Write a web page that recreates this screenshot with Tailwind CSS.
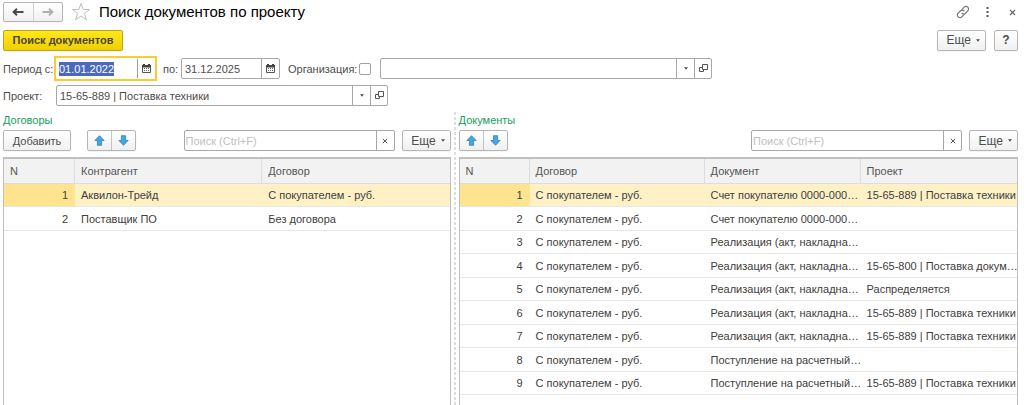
<!DOCTYPE html>
<html lang="ru">
<head>
  <meta charset="UTF-8">
  <meta name="viewport" content="width=device-width, initial-scale=1.0">
  <title>Поиск документов по проекту</title>
  <script src="https://cdn.jsdelivr.net/npm/@tailwindcss/browser@4"></script>
</head>
<body class="min-h-screen flex flex-col bg-white pl-[3px] pr-[6px] font-['Liberation_Sans',Arial,sans-serif] text-[11px] leading-4 text-[#4d4d4d]">
  <!-- Icons -->
  <svg class="hidden">
    <symbol id="calendar" viewBox="0 0 9 9">
      <path d="M.5 1.5h8v7h-8z" fill="none" stroke="#555"/>
      <path d="M0 1h9v2.5H0zM1 0h2v1H1zM6 0h2v1H6z" fill="#444"/>
      <path d="M2 4h1v1H2zM4 4h1v1H4zM6 4h1v1H6zM2 6h1v1H2zM4 6h1v1H4zM6 6h1v1H6z" fill="#666"/>
    </symbol>
    <symbol id="open" viewBox="0 0 9 9">
      <path d="M3.5.5h5v5h-5zM3.5 3.5h-3v4h4v-2" fill="none" stroke="#555"/>
    </symbol>
    <symbol id="caret" viewBox="0 0 5 3">
      <path d="M0 0h5L2.5 3z" fill="#4d4d4d"/>
    </symbol>
    <symbol id="cross" viewBox="0 0 7 7">
      <path d="M1 1l5 5M6 1L1 6" fill="none" stroke="currentColor" stroke-width="1.1"/>
    </symbol>
    <symbol id="arrow-up" viewBox="0 0 11 11">
      <path d="M5.5.7l4.6 4.8H7.6v4.8H3.4V5.5H.9z" fill="#3fa9e8" stroke="#3a7fae" stroke-width=".8"/>
    </symbol>
    <symbol id="arrow-down" viewBox="0 0 11 11">
      <path d="M5.5 10.3L.9 5.5h2.5V.7h4.2v4.8h2.5z" fill="#3fa9e8" stroke="#3a7fae" stroke-width=".8"/>
    </symbol>
  </svg>

  <!-- Title bar -->
  <header class="flex items-center h-6">
    <div class="flex h-5 w-[60px] border border-[#b5b5b5] rounded-xs bg-linear-to-b from-white to-[#f0f0f0] shadow-xs">
      <button aria-label="Назад" class="flex-1 flex items-center justify-center border-r border-[#d0d0d0]">
        <svg class="w-3 h-2" viewBox="0 0 12 8"><path d="M11.5 4H2M5 .8L1.6 4 5 7.2" fill="none" stroke="#4a4a4a" stroke-width="2"/></svg>
      </button>
      <button aria-label="Вперед" class="flex-1 flex items-center justify-center">
        <svg class="w-3 h-2" viewBox="0 0 12 8"><path d="M.5 4H10M7 .8L10.4 4 7 7.2" fill="none" stroke="#b0b0b0" stroke-width="2"/></svg>
      </button>
    </div>
    <button aria-label="В избранное" class="ml-2">
      <svg class="w-5 h-5" viewBox="0 0 20 20"><path d="M10 1.5l2.2 6h6.3l-5 3.9 1.9 6.4L10 14l-5.4 3.8 1.9-6.4-5-3.9h6.3z" fill="none" stroke="#b8bec8"/></svg>
    </button>
    <h1 class="ml-2 flex-1 text-[15px] leading-6 text-black">Поиск документов по проекту</h1>
    <div class="flex items-center pr-[2px] text-[#666]">
      <button aria-label="Ссылка">
        <svg class="w-[14px] h-[14px]" viewBox="0 0 14 14"><g fill="none" stroke="#777" stroke-width="1.2" stroke-linecap="round"><path d="M6 4.4l2.2-2.2a2.5 2.5 0 0 1 3.6 3.6L9.4 8.2a2.5 2.5 0 0 1-3.4 0"/><path d="M8 9.6l-2.2 2.2a2.5 2.5 0 0 1-3.6-3.6l2.4-2.4a2.5 2.5 0 0 1 3.4 0"/></g></svg>
      </button>
      <button aria-label="Меню" class="ml-4">
        <svg class="w-[3px] h-[10px]" viewBox="0 0 3 10"><path d="M.5 0h2v2h-2zM.5 4h2v2h-2zM.5 8h2v2h-2z" fill="#555"/></svg>
      </button>
      <button aria-label="Закрыть" class="ml-5"><svg class="w-[7px] h-[7px]"><use href="#cross"/></svg></button>
    </div>
  </header>

  <!-- Commands -->
  <div class="flex items-center mt-[5px] h-[22px]">
    <button class="h-[21px] w-[120px] border border-[#bfa310] rounded-xs bg-linear-to-b from-[#ffe81a] to-[#f0d000] shadow-xs font-bold text-[#4a4533]">Поиск документов</button>
    <div class="flex-1"></div>
    <button class="flex items-center justify-end pr-[5px] gap-[5px] h-[21px] w-[49px] border border-[#b5b5b5] rounded-xs bg-linear-to-b from-white to-[#f0f0f0] shadow-xs text-[12px]">Еще <svg class="w-[4px] h-[3px]"><use href="#caret"/></svg></button>
    <button class="ml-2 h-[21px] w-6 border border-[#b5b5b5] rounded-xs bg-linear-to-b from-white to-[#f0f0f0] shadow-xs text-[12px] font-bold">?</button>
  </div>

  <!-- Filters -->
  <div class="flex items-center mt-[5px] h-[25px]">
    <label for="from" class="w-[51px] whitespace-nowrap">Период с:</label>
    <div class="flex items-center h-[25px] w-[103px] border-2 border-[#fbcb2f] bg-white">
      <input id="from" type="text" value="01.01.2022" class="min-w-0 flex-1 h-[14px] pl-[3px] leading-[14px] outline-none selection:bg-[#4a69bd] selection:text-white">
      <button aria-label="Выбрать дату начала" class="flex items-center justify-center w-[18px] h-[19px] border-l border-[#a0a0a0]"><svg class="w-[9px] h-[9px]"><use href="#calendar"/></svg></button>
    </div>
    <label for="to" class="ml-[6px] w-[18px]">по:</label>
    <div class="flex h-[21px] w-[99px] border border-[#a8a8a8] rounded-xs">
      <input id="to" type="text" value="31.12.2025" class="min-w-0 flex-1 pl-[3px] outline-none">
      <button aria-label="Выбрать дату окончания" class="flex items-center justify-center w-[18px] border-l border-[#a8a8a8]"><svg class="w-[9px] h-[9px]"><use href="#calendar"/></svg></button>
    </div>
    <label for="use-org" class="ml-2 w-[71px]">Организация:</label>
    <input id="use-org" type="checkbox" class="appearance-none w-3 h-3 border border-[#a0a0a0] rounded-xs">
    <div class="ml-[9px] flex h-[21px] w-[332px] border border-[#a8a8a8] rounded-xs">
      <select aria-label="Организация" class="appearance-none min-w-0 flex-1 pl-[3px] outline-none"><option></option></select>
      <button aria-label="Список организаций" class="flex items-center justify-center w-[18px] border-l border-[#a8a8a8]"><svg class="w-[4px] h-[3px]"><use href="#caret"/></svg></button>
      <button aria-label="Открыть организацию" class="flex items-center justify-center w-[17px] border-l border-[#a8a8a8]"><svg class="w-[9px] h-[9px]"><use href="#open"/></svg></button>
    </div>
  </div>
  <div class="flex items-center mt-1 h-[21px]">
    <label for="project" class="w-[53px]">Проект:</label>
    <div class="flex h-[21px] w-[332px] border border-[#a8a8a8] rounded-xs">
      <select id="project" class="appearance-none min-w-0 flex-1 pl-[3px] outline-none"><option>15-65-889 | Поставка техники</option></select>
      <button aria-label="Список проектов" class="flex items-center justify-center w-[18px] border-l border-[#a8a8a8]"><svg class="w-[4px] h-[3px]"><use href="#caret"/></svg></button>
      <button aria-label="Открыть проект" class="flex items-center justify-center w-[17px] border-l border-[#a8a8a8]"><svg class="w-[9px] h-[9px]"><use href="#open"/></svg></button>
    </div>
  </div>

  <main class="flex flex-1 mt-[6px]">
    <!-- Договоры -->
    <section class="flex flex-col flex-4 min-w-0">
      <h2 class="h-[18px] text-[#16a05d]">Договоры</h2>
      <div class="flex h-[21px]">
        <button class="w-[68px] border border-[#b5b5b5] rounded-xs bg-linear-to-b from-white to-[#f0f0f0] shadow-xs">Добавить</button>
        <div class="ml-4 flex w-[49px] border border-[#b5b5b5] rounded-xs bg-linear-to-b from-white to-[#f0f0f0] shadow-xs">
          <button aria-label="Вверх" class="flex-1 flex items-center justify-center border-r border-[#c4c4c4]"><svg class="w-[11px] h-[11px]"><use href="#arrow-up"/></svg></button>
          <button aria-label="Вниз" class="flex-1 flex items-center justify-center"><svg class="w-[11px] h-[11px]"><use href="#arrow-down"/></svg></button>
        </div>
        <div class="ml-auto flex w-[211px] border border-[#a8a8a8] rounded-xs">
          <input type="text" aria-label="Поиск договоров" placeholder="Поиск (Ctrl+F)" class="min-w-0 flex-1 pl-px outline-none placeholder:text-[#c0c0c0]">
          <button aria-label="Очистить" class="flex items-center justify-center w-[18px] border-l border-[#a8a8a8]"><svg class="w-[6px] h-[6px]" viewBox="0 0 7 7"><use href="#cross"/></svg></button>
        </div>
        <button class="ml-[7px] flex items-center justify-end pr-[5px] gap-[5px] w-[49px] border border-[#b5b5b5] rounded-xs bg-linear-to-b from-white to-[#f0f0f0] shadow-xs text-[12px]">Еще <svg class="w-[4px] h-[3px]"><use href="#caret"/></svg></button>
      </div>
      <div class="mt-[6px] flex-1 border border-t-2 border-b-0 border-[#c0c0c0]">
        <table class="w-full table-fixed border-separate border-spacing-0">
          <colgroup><col class="w-[71px]"><col><col></colgroup>
          <thead>
            <tr class="h-[25px] bg-[#f2f2f2] text-left text-[#555] *:p-0 *:pl-[6px] *:font-normal *:border-b *:border-[#dcdcdc]">
              <th class="border-r">N</th><th class="border-r">Контрагент</th><th>Договор</th>
            </tr>
          </thead>
          <tbody class="*:odd:h-[23px] *:even:h-6 *:*:p-0 *:*:pl-[6px] *:*:whitespace-nowrap *:*:border-b *:*:border-[#e6e6e6] text-[#404040]">
            <tr class="bg-[#fff1c6]"><td class="bg-[#ffe48f] text-right pr-[7px]!">1</td><td>Аквилон-Трейд</td><td>С покупателем - руб.</td></tr>
            <tr><td class="text-right pr-[7px]!">2</td><td>Поставщик ПО</td><td>Без договора</td></tr>
          </tbody>
        </table>
      </div>
    </section>

    <div class="w-2 flex justify-center"><div class="w-[2px] bg-[repeating-linear-gradient(#dedede_0_3px,white_3px_5px)]"></div></div>

    <!-- Документы -->
    <section class="flex flex-col flex-5 min-w-0">
      <h2 class="h-[18px] text-[#16a05d]">Документы</h2>
      <div class="flex h-[21px]">
        <div class="flex w-[49px] border border-[#b5b5b5] rounded-xs bg-linear-to-b from-white to-[#f0f0f0] shadow-xs">
          <button aria-label="Вверх" class="flex-1 flex items-center justify-center border-r border-[#c4c4c4]"><svg class="w-[11px] h-[11px]"><use href="#arrow-up"/></svg></button>
          <button aria-label="Вниз" class="flex-1 flex items-center justify-center"><svg class="w-[11px] h-[11px]"><use href="#arrow-down"/></svg></button>
        </div>
        <div class="ml-auto flex w-[211px] border border-[#a8a8a8] rounded-xs">
          <input type="text" aria-label="Поиск документов" placeholder="Поиск (Ctrl+F)" class="min-w-0 flex-1 pl-px outline-none placeholder:text-[#c0c0c0]">
          <button aria-label="Очистить" class="flex items-center justify-center w-[18px] border-l border-[#a8a8a8]"><svg class="w-[6px] h-[6px]" viewBox="0 0 7 7"><use href="#cross"/></svg></button>
        </div>
        <button class="ml-[7px] flex items-center justify-end pr-[5px] gap-[5px] w-[49px] border border-[#b5b5b5] rounded-xs bg-linear-to-b from-white to-[#f0f0f0] shadow-xs text-[12px]">Еще <svg class="w-[4px] h-[3px]"><use href="#caret"/></svg></button>
      </div>
      <div class="mt-[6px] flex-1 border border-t-2 border-b-0 border-[#c0c0c0]">
        <table class="w-full table-fixed border-separate border-spacing-0">
          <colgroup><col class="w-[70px]"><col class="w-[175px]"><col class="w-[156px]"><col></colgroup>
          <thead>
            <tr class="h-[25px] bg-[#f2f2f2] text-left text-[#555] *:p-0 *:pl-[6px] *:font-normal *:border-b *:border-[#dcdcdc]">
              <th class="border-r">N</th><th class="border-r">Договор</th><th class="border-r">Документ</th><th>Проект</th>
            </tr>
          </thead>
          <tbody class="*:odd:h-[23px] *:even:h-6 *:*:p-0 *:*:pl-[6px] *:*:whitespace-nowrap *:*:border-b *:*:border-[#e6e6e6] text-[#404040]">
            <tr class="bg-[#fff1c6]"><td class="bg-[#ffe48f] text-right pr-[7px]!">1</td><td>С покупателем - руб.</td><td>Счет покупателю 0000-000…</td><td>15-65-889 | Поставка техники</td></tr>
            <tr><td class="text-right pr-[7px]!">2</td><td>С покупателем - руб.</td><td>Счет покупателю 0000-000…</td><td></td></tr>
            <tr><td class="text-right pr-[7px]!">3</td><td>С покупателем - руб.</td><td>Реализация (акт, накладна…</td><td></td></tr>
            <tr><td class="text-right pr-[7px]!">4</td><td>С покупателем - руб.</td><td>Реализация (акт, накладна…</td><td>15-65-800 | Поставка докум…</td></tr>
            <tr><td class="text-right pr-[7px]!">5</td><td>С покупателем - руб.</td><td>Реализация (акт, накладна…</td><td>Распределяется</td></tr>
            <tr><td class="text-right pr-[7px]!">6</td><td>С покупателем - руб.</td><td>Реализация (акт, накладна…</td><td>15-65-889 | Поставка техники</td></tr>
            <tr><td class="text-right pr-[7px]!">7</td><td>С покупателем - руб.</td><td>Реализация (акт, накладна…</td><td>15-65-889 | Поставка техники</td></tr>
            <tr><td class="text-right pr-[7px]!">8</td><td>С покупателем - руб.</td><td>Поступление на расчетный…</td><td></td></tr>
            <tr><td class="text-right pr-[7px]!">9</td><td>С покупателем - руб.</td><td>Поступление на расчетный…</td><td>15-65-889 | Поставка техники</td></tr>
          </tbody>
        </table>
      </div>
    </section>
  </main>

  <script>
    const from = document.getElementById('from');
    from.focus();
    from.select();
  </script>
</body>
</html>
